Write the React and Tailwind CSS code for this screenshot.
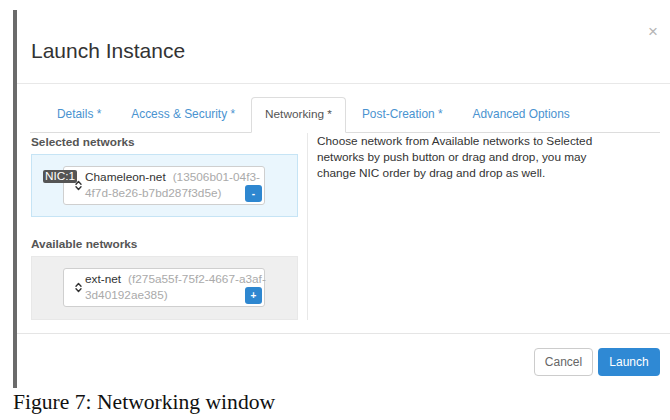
import React from "react";

const SortIcon = () => (
  <svg width="7" height="11" viewBox="0 0 7 11" fill="none">
    <path d="M1 4.2 L3.5 1.6 L6 4.2" stroke="#333" strokeWidth="1.4" strokeLinecap="round" strokeLinejoin="round" />
    <path d="M1 6.8 L3.5 9.4 L6 6.8" stroke="#333" strokeWidth="1.4" strokeLinecap="round" strokeLinejoin="round" />
  </svg>
);

const NetCard = ({ name, idA, idB, sign, badge }) => (
  <div className="relative flex w-[202px] h-[39px] bg-white border border-[#cfcfcf] rounded-[3px]">
    {badge && (
      <div className="absolute left-[-21px] top-[3px] bg-[#555] text-white text-[11.8px] leading-[13px] px-[2px] rounded-[2px]">
        {badge}
      </div>
    )}
    <div className="w-[21px] shrink-0 flex items-center pl-[11px]">
      <SortIcon />
    </div>
    <div className="pt-[2px] leading-[16px] text-[11.8px] whitespace-nowrap">
      <div>
        <span className="text-[#333]">{name}</span>
        <span className="ml-[7px] text-[#aaa]">{idA}</span>
      </div>
      <div className="text-[#aaa]">{idB}</div>
    </div>
    <div className="absolute right-[2px] bottom-[2px] w-[17px] h-[17px] rounded-[3px] bg-[#2e87d0] text-white text-[10px] leading-[17px] text-center font-bold">
      {sign}
    </div>
  </div>
);

export default function App() {
  const tabs = [
    { label: "Details *" },
    { label: "Access & Security *" },
    { label: "Networking *", active: true },
    { label: "Post-Creation *" },
    { label: "Advanced Options" },
  ];
  return (
    <div
      className="w-[670px] h-[420px] overflow-hidden bg-white"
      style={{ fontFamily: '"Liberation Sans", Arial, sans-serif' }}
    >
      <div className="flex pl-[13px]">
        <div className="w-[4px] h-[378px] mt-[10px] bg-[#6b6b6b]" />
        <div className="w-[653px] h-[388px] flex flex-col">
          {/* header */}
          <div className="h-[84px] border-b border-[#e8e8e8] flex justify-between">
            <div className="pl-[14px] pt-[39px] text-[21px] leading-[24px] text-[#333]">Launch Instance</div>
            <div className="pr-[12px] pt-[22px] text-[17px] leading-[20px] text-[#b5b5b5]">×</div>
          </div>
          {/* tabs */}
          <div className="mt-[13px] ml-[13px] w-[630px] h-[36px] border-b border-[#dddddd] flex pl-[13px]">
            {tabs.map((t) =>
              t.active ? (
                <div
                  key={t.label}
                  className="h-[36px] px-[13px] mr-[2px] flex items-center border border-[#dddddd] border-b-white bg-white rounded-t-[4px] text-[11.8px] text-[#555]"
                >
                  {t.label}
                </div>
              ) : (
                <div
                  key={t.label}
                  className="h-[35px] px-[13px] mr-[2px] flex items-center border border-transparent text-[11.9px] text-[#4a93d0] whitespace-nowrap"
                >
                  {t.label}
                </div>
              )
            )}
          </div>
          {/* content */}
          <div className="h-[200px] flex pl-[14px]">
            <div className="w-[267px]">
              <div className="mt-[1px] leading-[16px] text-[11.8px] font-bold text-[#555]">Selected networks</div>
              <div className="mt-[4px] h-[63px] bg-[#eaf6fd] border border-[#c6e4f5] pl-[31px] pt-[11px]">
                <NetCard
                  badge="NIC:1"
                  name="Chameleon-net"
                  idA="(13506b01-04f3-"
                  idB="4f7d-8e26-b7bd287f3d5e)"
                  sign="-"
                />
              </div>
              <div className="mt-[19px] leading-[16px] text-[11.8px] font-bold text-[#555]">Available networks</div>
              <div className="mt-[4px] h-[64px] bg-[#efefef] border border-[#e8e8e8] pl-[31px] pt-[11px]">
                <NetCard
                  name="ext-net"
                  idA="(f275a55f-75f2-4667-a3af-"
                  idB="3d40192ae385)"
                  sign="+"
                />
              </div>
            </div>
            <div className="ml-[9px] h-[187px] border-l border-[#e8e8e8] pl-[9px] text-[11.8px] leading-[16px] text-[#333]">
              Choose network from Available networks to Selected
              <br />
              networks by push button or drag and drop, you may
              <br />
              change NIC order by drag and drop as well.
            </div>
          </div>
          {/* footer */}
          <div className="border-t border-[#e5e5e5] pt-[14px] pr-[10px] flex justify-end gap-[5px]">
            <div className="w-[59px] h-[28px] flex items-center justify-center border border-[#cccccc] rounded-[4px] bg-white text-[12px] text-[#666]">
              Cancel
            </div>
            <div className="w-[62px] h-[28px] flex items-center justify-center rounded-[4px] bg-[#2f89d4] text-[12px] text-white">
              Launch
            </div>
          </div>
        </div>
      </div>
      <div
        className="mt-[2px] pl-[13px] text-[21.6px] leading-[24px] text-[#111]"
        style={{ fontFamily: '"Liberation Serif", "Times New Roman", serif' }}
      >
        Figure 7: Networking window
      </div>
    </div>
  );
}
